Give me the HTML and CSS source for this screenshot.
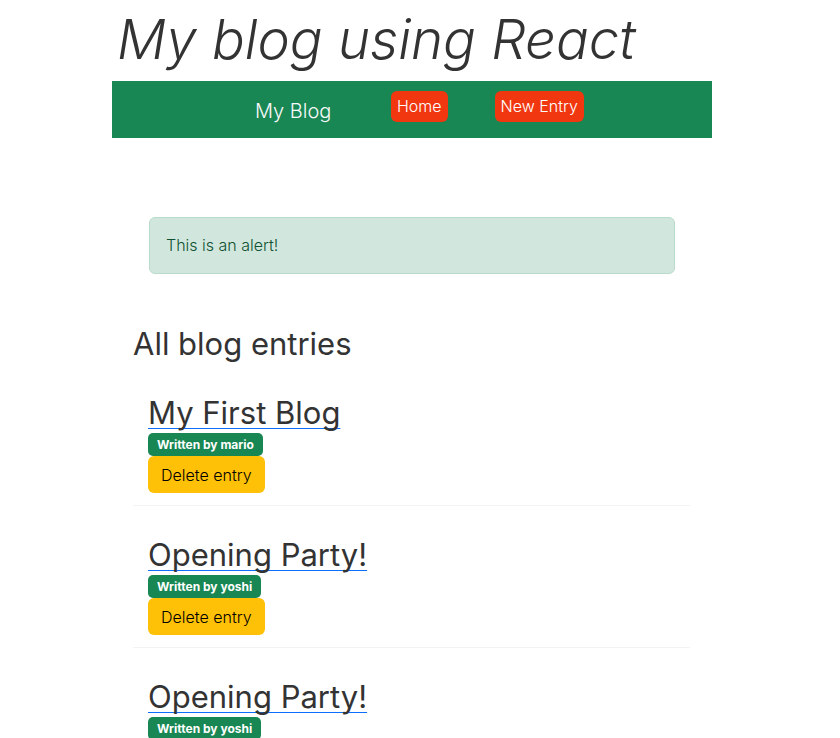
FILE: index.html
```html
<!DOCTYPE html>
<html>
<head>
<meta charset="utf-8">
<link rel="stylesheet" href="styles.css">
</head>
<body>
<div class="page">
  <h1 class="site-title">My blog using React</h1>
  <nav class="navbar">
    <span class="brand">My Blog</span>
    <a class="nav-btn home">Home</a>
    <a class="nav-btn new">New Entry</a>
  </nav>
  <main class="content">
    <div class="alert">This is an alert!</div>
    <h2 class="section-title">All blog entries</h2>
    <ul class="entries">
      <li class="entry">
        <a class="entry-title">My First Blog</a>
        <div><span class="badge">Written by mario</span></div>
        <button class="delete">Delete entry</button>
      </li>
      <li class="entry">
        <a class="entry-title">Opening Party!</a>
        <div><span class="badge">Written by yoshi</span></div>
        <button class="delete">Delete entry</button>
      </li>
      <li class="entry">
        <a class="entry-title">Opening Party!</a>
        <div><span class="badge">Written by yoshi</span></div>
        <button class="delete">Delete entry</button>
      </li>
    </ul>
  </main>
</div>
</body>
</html>
```
FILE: styles.css
```css
* { box-sizing: border-box; }
body {
  margin: 0;
  font-family: Inter, "Open Sans", sans-serif;
  color: #333;
  background: #fff;
}
.page {
  width: 600px;
  margin-left: 112px;
}
.site-title {
  margin: 0;
  height: 81px;
  padding: 6px 0 0 5px;
  font-size: 54.5px;
  font-weight: 300;
  font-style: italic;
  line-height: 66px;
  color: #333;
}
.navbar {
  height: 57px;
  background: #198754;
  display: flex;
  align-items: center;
  padding-left: 143px;
}
.brand {
  color: #f8f9fa;
  font-size: 20px;
  font-weight: 300;
  width: 136px;
  padding-top: 2px;
}
.nav-btn {
  background: #f0370f;
  color: #fff;
  font-size: 16px;
  font-weight: 300;
  border-radius: 6px;
  padding: 0 6px;
  height: 31px;
  line-height: 31px;
  margin-bottom: 6px;
}
.nav-btn.home { margin-right: 47px; }
.content {
  padding: 79px 0 0 21px;
}
.alert {
  margin-left: 16px;
  width: 526px;
  height: 57px;
  background: #d1e7dd;
  border: 1px solid #badbcc;
  border-radius: 6px;
  color: #0f5132;
  font-size: 16px;
  font-weight: 300;
  padding: 17px 16px;
}
.section-title {
  margin: 0;
  padding-top: 52px;
  font-size: 31px;
  font-weight: 400;
  line-height: 36px;
  color: #333;
}
.entries {
  list-style: none;
  margin: 0;
  padding: 0;
  width: 557px;
}
.entry {
  padding: 28px 15px 0;
  border-bottom: 1px solid #f3f3f3;
  height: 142px;
}
.entry:first-child { height: 144px; padding-top: 30px; }
.entry-title {
  display: inline-block;
  font-size: 31px;
  line-height: 41px;
  height: 41px;
  color: #333;
  text-decoration: underline 1px #0d6efd;
  text-underline-offset: 4px;
  text-decoration-skip-ink: none;
}
.badge {
  display: inline-block;
  background: #198754;
  color: #fff;
  font-size: 12px;
  font-weight: 700;
  border-radius: 5px;
  padding: 0 9px;
  height: 23px;
  line-height: 23px;
}
.delete {
  display: block;
  background: #ffc107;
  border: none;
  border-radius: 6px;
  font-family: inherit;
  font-size: 16px;
  font-weight: 300;
  color: #000;
  height: 37px;
  padding: 0 13px;
}
```
